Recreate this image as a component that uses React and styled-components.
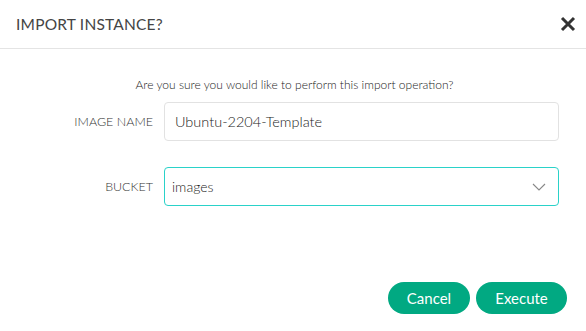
import React from 'react';
import styled, { createGlobalStyle } from 'styled-components';

const GlobalStyle = createGlobalStyle`
    html, body {
        margin: 0;
        padding: 0;
        background: #fff;
        font-family: Lato, "Liberation Sans", sans-serif;
    }
`;

const Dialog = styled.div`
    width: 586px;
    height: 331px;
    display: flex;
    flex-direction: column;
    background: #fff;
`;

const Header = styled.div`
    height: 48px;
    display: flex;
    align-items: center;
    justify-content: space-between;
    padding: 0 9px 0 16px;
    border-bottom: 1px solid #e4e4e4;
`;

const Title = styled.h2`
    margin: 0;
    font-size: 15.5px;
    font-weight: 400;
    color: #444;
    letter-spacing: 0.2px;
`;

const CloseButton = styled.button`
    border: none;
    background: none;
    padding: 0;
    width: 18px;
    height: 18px;
    display: flex;
    align-items: center;
    justify-content: center;
    cursor: pointer;
`;

const Body = styled.div`
    flex: 1;
    display: flex;
    flex-direction: column;
    padding: 28px 27px 0 0;
`;

const Question = styled.p`
    margin: 0 0 10px 0;
    padding-left: 30px;
    text-align: center;
    font-size: 12px;
    font-weight: 300;
    color: #222;
`;

const Row = styled.div`
    display: flex;
    align-items: center;
    margin-bottom: ${p => p.gap || 0}px;
`;

const Label = styled.label`
    width: 164px;
    padding-right: 11px;
    box-sizing: border-box;
    text-align: right;
    font-size: 12.5px;
    font-weight: 300;
    color: #333;
`;

const Field = styled.div`
    width: 395px;
    height: 39px;
    box-sizing: border-box;
    border: 1px solid ${p => p.focused ? '#2ad2c9' : '#e2e2e2'};
    border-radius: 4px;
    display: flex;
    align-items: center;
    justify-content: space-between;
    padding: ${p => p.focused ? '0 12px 0 7px' : '0 10px'};
    font-size: ${p => p.focused ? 14 : 14.5}px;
    font-weight: 300;
    color: #222;
`;

const Footer = styled.div`
    display: flex;
    justify-content: flex-end;
    gap: 6px;
    padding: 0 19px 17px 0;
`;

const Button = styled.button`
    height: 32px;
    width: ${p => p.w}px;
    padding: 0;
    border: none;
    border-radius: 16px;
    background: #01a982;
    color: #fff;
    font-family: Lato, "Liberation Sans", sans-serif;
    font-size: 15px;
`;

const Chevron = () => (
    <svg width="14" height="8" viewBox="0 0 14 8">
        <path d="M1 1l6 6 6-6" fill="none" stroke="#888" strokeWidth="1.1" />
    </svg>
);

const CloseIcon = () => (
    <svg width="16" height="16" viewBox="0 0 16 16">
        <path d="M2 2l12 12M14 2L2 14" stroke="#333" strokeWidth="3" />
    </svg>
);

const App = () => {
    return (
        <Dialog>
            <GlobalStyle />
            <Header>
                <Title>IMPORT INSTANCE?</Title>
                <CloseButton aria-label="close"><CloseIcon /></CloseButton>
            </Header>
            <Body>
                <Question>Are you sure you would like to perform this import operation?</Question>
                <Row gap={26}>
                    <Label>IMAGE NAME</Label>
                    <Field>Ubuntu-2204-Template</Field>
                </Row>
                <Row>
                    <Label>BUCKET</Label>
                    <Field focused>
                        images
                        <Chevron />
                    </Field>
                </Row>
            </Body>
            <Footer>
                <Button w={82}>Cancel</Button>
                <Button w={91}>Execute</Button>
            </Footer>
        </Dialog>
    );
};

export default App;
